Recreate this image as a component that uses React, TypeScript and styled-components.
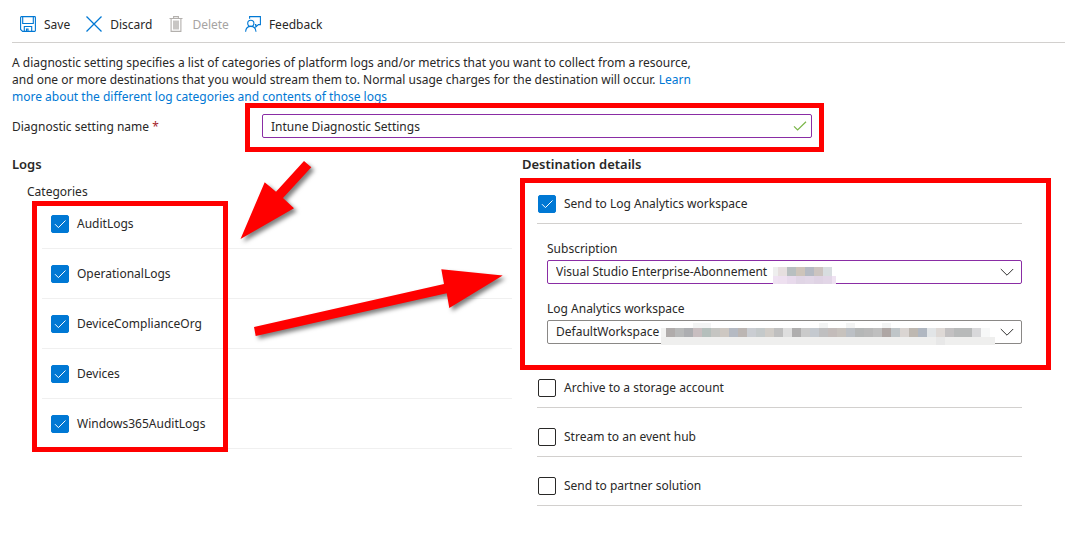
import React from "react";
import styled, { createGlobalStyle, css } from "styled-components";

const color = {
  text: "#292827",
  muted: "#a6a4a2",
  blue: "#0078d4",
  line: "#d2d0ce",
  faintLine: "#f0f0f0",
  purple: "#8a2da5",
  grey: "#8a8886",
  red: "#ff0000",
  required: "#a4262c",
  green: "#7ab648",
};

const GlobalStyle = createGlobalStyle`
  * { box-sizing: border-box; }
  body {
    margin: 0;
    background: #fff;
    color: ${color.text};
    font-family: "Noto Sans", "Open Sans", sans-serif;
    font-size: 12px;
    line-height: 16px;
  }
  button, input, select { font: inherit; color: inherit; }
`;

const Page = styled.main`
  position: relative;
  padding-left: 12px;
`;

const Toolbar = styled.div`
  display: flex;
  align-items: center;
  gap: 16px;
  height: 43px;
  padding: 8px 8px 0;
  border-bottom: 1px solid ${color.line};
`;

const ToolButton = styled.button`
  display: flex;
  align-items: center;
  gap: 8px;
  padding: 0;
  border: 0;
  background: none;
  cursor: pointer;

  &:disabled {
    color: ${color.muted};
    cursor: default;
  }

  svg {
    flex: none;
    width: 16px;
    height: 16px;
    margin-bottom: 2px;
    fill: none;
  }
`;

const Content = styled.div`
  padding: 11px 43px 32px 0;
`;

const Description = styled.p`
  max-width: 696px;
  margin: 0;
  line-height: 17px;
`;

const Link = styled.a`
  color: ${color.blue};
  text-decoration: none;
`;

const NameRow = styled.div`
  display: grid;
  grid-template-columns: 250px minmax(0, 550px);
  align-items: center;
  margin: 9px 0 16px;
  line-height: 18px;
`;

const NameLabel = styled.label`
  padding-top: 2px;
`;

const Required = styled.span`
  color: ${color.required};
`;

const Control = styled.div`
  position: relative;
`;

const fieldStyle = css`
  display: block;
  width: 100%;
  height: 24px;
  padding: 0 32px 0 8px;
  border: 1px solid ${color.purple};
  border-radius: 2px;
  background: #fff;
  outline: none;
`;

const TextInput = styled.input`
  ${fieldStyle}
`;

const Select = styled.select<{ $quiet?: boolean }>`
  ${fieldStyle}
  appearance: none;
  border-color: ${(p) => (p.$quiet ? color.grey : color.purple)};
`;

const FieldIcon = styled.svg<{ $right: number }>`
  position: absolute;
  top: 5px;
  right: ${(p) => p.$right}px;
  width: 14px;
  height: 14px;
  fill: none;
  pointer-events: none;
`;

const Mosaic = styled.svg<{ $left: number; $top: number }>`
  position: absolute;
  left: ${(p) => p.$left}px;
  top: ${(p) => p.$top}px;
  pointer-events: none;
`;

const Columns = styled.div`
  display: grid;
  grid-template-columns: 1fr 1fr;
  gap: 10px;
`;

const Heading = styled.h2`
  margin: 0;
  font-size: 13px;
  font-weight: 600;
  line-height: 21px;
`;

const Categories = styled.h3`
  margin: 8px 0 0 15px;
  padding-top: 1px;
  font-size: 12px;
  font-weight: 400;
  line-height: 15px;
`;

const CategoryList = styled.div`
  position: relative;
  margin-left: 30px;
`;

const CheckRow = styled.label<{ $category?: boolean }>`
  display: flex;
  align-items: center;
  gap: 8px;
  padding: ${(p) => (p.$category ? "16px 0 15px 9px" : "20px 0 10px 1px")};
  border-bottom: 1px solid ${(p) => (p.$category ? color.faintLine : color.line)};
`;

const Box = styled.span`
  position: relative;
  display: flex;
  flex: none;

  input {
    appearance: none;
    width: 18px;
    height: 18px;
    margin: 0;
    border: 1px solid ${color.text};
    border-radius: 2px;
    background: #fff;
  }

  input:checked {
    border-color: ${color.blue};
    background: ${color.blue};
  }

  svg {
    position: absolute;
    inset: 0;
    fill: none;
    stroke: #fff;
    pointer-events: none;
  }
`;

const Destinations = styled.div`
  margin-left: 15px;
`;

const Analytics = styled.section`
  position: relative;
`;

const Fields = styled.div`
  display: grid;
  gap: 17px;
  padding: 17px 0 15px 10px;
`;

const Field = styled.div`
  display: grid;
  gap: 3px;
`;

const Highlight = styled.div<{ $inset: string; $width?: number }>`
  position: absolute;
  inset: ${(p) => p.$inset};
  width: ${(p) => (p.$width ? `${p.$width}px` : "auto")};
  border: 5px solid ${color.red};
  pointer-events: none;
`;

const Arrows = styled.svg`
  position: absolute;
  top: 0;
  left: 0;
  fill: ${color.red};
  filter: drop-shadow(3px 3px 2px rgba(0, 0, 0, 0.5));
  pointer-events: none;
`;

const SaveIcon = () => (
  <svg viewBox="0 0 16 16" stroke={color.blue} strokeWidth="1.1">
    <path d="M.6 1.4a.8.8 0 0 1 .8-.8h13.2a.8.8 0 0 1 .8.8v13.2a.8.8 0 0 1-.8.8H2.6l-2-2z" />
    <path d="M2.700.8v6.700h10.600V.8M4.300 15.200v-4.700h7.400v4.700M6.500 15.200v-2.200h1.500v2.200" />
  </svg>
);

const DiscardIcon = () => (
  <svg viewBox="0 0 16 16" stroke={color.blue} strokeWidth="1.3">
    <path d="M.5.5l15 15M15.5.5l-15 15" />
  </svg>
);

const DeleteIcon = () => (
  <svg viewBox="0 0 16 16" stroke="#b3b0ad" strokeWidth="1.1">
    <path d="M1.500 2.500h13M5.600 2.200V.6h4.800v1.600M3.100 2.600v12.800h9.800V2.600" />
    <path d="M5 4.500h6v9H5z" fill="#c8c6c4" stroke="none" />
  </svg>
);

const FeedbackIcon = () => (
  <svg viewBox="0 0 16 16" stroke={color.blue} strokeWidth="1.100">
    <path d="M4.600 2.800V.6h10.800v8h-2l-2.600 2.400V8.600H9.900" />
    <circle cx="5.800" cy="7.300" r="3.100" />
    <path d="M.6 15.800c.2-3.200 2.200-5.400 5.200-5.400s5 2.200 5.200 5.400" />
  </svg>
);

const Chevron = () => (
  <FieldIcon $right={8} viewBox="0 0 14 14" stroke="#323130" strokeWidth="1">
    <path d="M.8 4 7 10.200 13.200 4" />
  </FieldIcon>
);

const ValidMark = () => (
  <FieldIcon $right={5} viewBox="0 0 14 14" stroke={color.green} strokeWidth="1.2">
    <path d="M1 7.300l3.600 3.600L13 2.800" />
  </FieldIcon>
);

function CheckOption({ label, checked, category }: { label: string; checked?: boolean; category?: boolean }) {
  return (
    <CheckRow $category={category}>
      <Box>
        <input type="checkbox" defaultChecked={checked} />
        {checked && (
          <svg width="18" height="18" viewBox="0 0 18 18">
            <path d="M4 9.200l3.400 3.400L14.500 5.500" />
          </svg>
        )}
      </Box>
      {label}
    </CheckRow>
  );
}

const CELL = 9;

const subscriptionCells = ["#e6dfdf", "#b8bfc0", "#cdc4ba", "#b5bac3", "#ccc4c0", "#d8dde0"];
const subscriptionShade = ["#eee0f0", "#e8daec", "#e0d5e5", "#e2d7e7", "#dfd3e4", "#e2d6e7"];

const workspaceCells = [
  "#b0acab", "#b8b9b9", "#adaeb1", "#c8bec0", "#b5bfbc", "#c5c5c2", "#cec8c2", "#b5bac3", "#bcb6b3",
  "#cacdd2", "#c4c9ca", "#d0ccc7", "#bfbfbf", "#dedede", "#afaeae", "#cacaca", "#c4c9cf", "#bfbfc0",
  "#c3bcba", "#c7c2bd", "#bcc0c5", "#b5b7b7", "#b9b9b9", "#bfbfbf", "#aea6a4", "#bfc5c8", "#dad5d2",
  "#beb8b1", "#b0b7c1", "#e2e5e7", "#ded9d6", "#c3c1c2", "#b8baba", "#b8baba", "#d8d8da", "#f7f8f8",
];
const workspaceTips = [3, 4, 17, 20, 24];

const SubscriptionMosaic = () => (
  <Mosaic $left={226} $top={7} width="63" height="17" shapeRendering="crispEdges">
    <rect width="5" height="9" fill="#eeeeee" />
    <rect y="9" width="63" height="8" fill="#efe2f2" />
    {subscriptionCells.map((fill, i) => (
      <rect key={i} x={5 + i * CELL} width={CELL} height="9" fill={fill} />
    ))}
    {subscriptionShade.map((fill, i) => (
      <rect key={i} x={5 + i * CELL} y="9" width={CELL} height="8" fill={fill} />
    ))}
  </Mosaic>
);

const WorkspaceMosaic = () => (
  <Mosaic $left={114} $top={3} width="334" height="22" shapeRendering="crispEdges">
    <rect y="5" width="5" height="9" fill="#f2f2f1" />
    <rect y="14" width="334" height="8" fill="#efefee" />
    <rect x="275" y="14" width="9" height="8" fill="#e8e8e8" />
    {workspaceTips.map((i) => (
      <rect key={i} x={5 + i * CELL} width={CELL} height="5" fill="#f3f4f4" />
    ))}
    {workspaceCells.map((fill, i) => (
      <rect key={i} x={5 + i * CELL} y="5" width={CELL} height="9" fill={fill} />
    ))}
  </Mosaic>
);

const categories = ["AuditLogs", "OperationalLogs", "DeviceComplianceOrg", "Devices", "Windows365AuditLogs"];
const otherDestinations = ["Archive to a storage account", "Stream to an event hub", "Send to partner solution"];

export default function App() {
  return (
    <Page>
      <GlobalStyle />
      <Toolbar role="toolbar">
        <ToolButton><SaveIcon />Save</ToolButton>
        <ToolButton><DiscardIcon />Discard</ToolButton>
        <ToolButton disabled><DeleteIcon />Delete</ToolButton>
        <ToolButton><FeedbackIcon />Feedback</ToolButton>
      </Toolbar>

      <Content>
        <Description>
          A diagnostic setting specifies a list of categories of platform logs and/or metrics that you want to
          collect from a resource, and one or more destinations that you would stream them to. Normal usage
          charges for the destination will occur.{" "}
          <Link href="#">Learn more about the different log categories and contents of those logs</Link>
        </Description>

        <NameRow>
          <NameLabel htmlFor="name">
            Diagnostic setting name <Required>*</Required>
          </NameLabel>
          <Control>
            <TextInput id="name" type="text" defaultValue="Intune Diagnostic Settings" />
            <ValidMark />
            <Highlight $inset="-11px -12px -14px -17px" />
          </Control>
        </NameRow>

        <Columns>
          <section>
            <Heading>Logs</Heading>
            <Categories>Categories</Categories>
            <CategoryList>
              {categories.map((name) => (
                <CheckOption key={name} label={name} checked category />
              ))}
              <Highlight $inset="2px auto -3px -10px" $width={196} />
            </CategoryList>
          </section>

          <section>
            <Heading>Destination details</Heading>
            <Destinations>
              <Analytics>
                <CheckOption label="Send to Log Analytics workspace" checked />
                <Fields>
                  <Field>
                    <label htmlFor="subscription">Subscription</label>
                    <Control>
                      <Select id="subscription">
                        <option>Visual Studio Enterprise-Abonnement</option>
                      </Select>
                      <SubscriptionMosaic />
                      <Chevron />
                    </Control>
                  </Field>
                  <Field>
                    <label htmlFor="workspace">Log Analytics workspace</label>
                    <Control>
                      <Select id="workspace" $quiet>
                        <option>DefaultWorkspace</option>
                      </Select>
                      <WorkspaceMosaic />
                      <Chevron />
                    </Control>
                  </Field>
                </Fields>
                <Highlight $inset="3px -29px -11px -17px" />
              </Analytics>
              {otherDestinations.map((name) => (
                <CheckOption key={name} label={name} />
              ))}
            </Destinations>
          </section>
        </Columns>
      </Content>

      <Arrows width="520" height="350" aria-hidden="true">
        <path d="M240.500 239 264.700 182.300 276 191.700 304 161 311.300 167.300 283 198 294 208.300z" />
        <path d="M254 327 444 284 441.300 269.300 502.700 275.500 449.300 308 446.700 293.300 255.700 336z" />
      </Arrows>
    </Page>
  );
}
